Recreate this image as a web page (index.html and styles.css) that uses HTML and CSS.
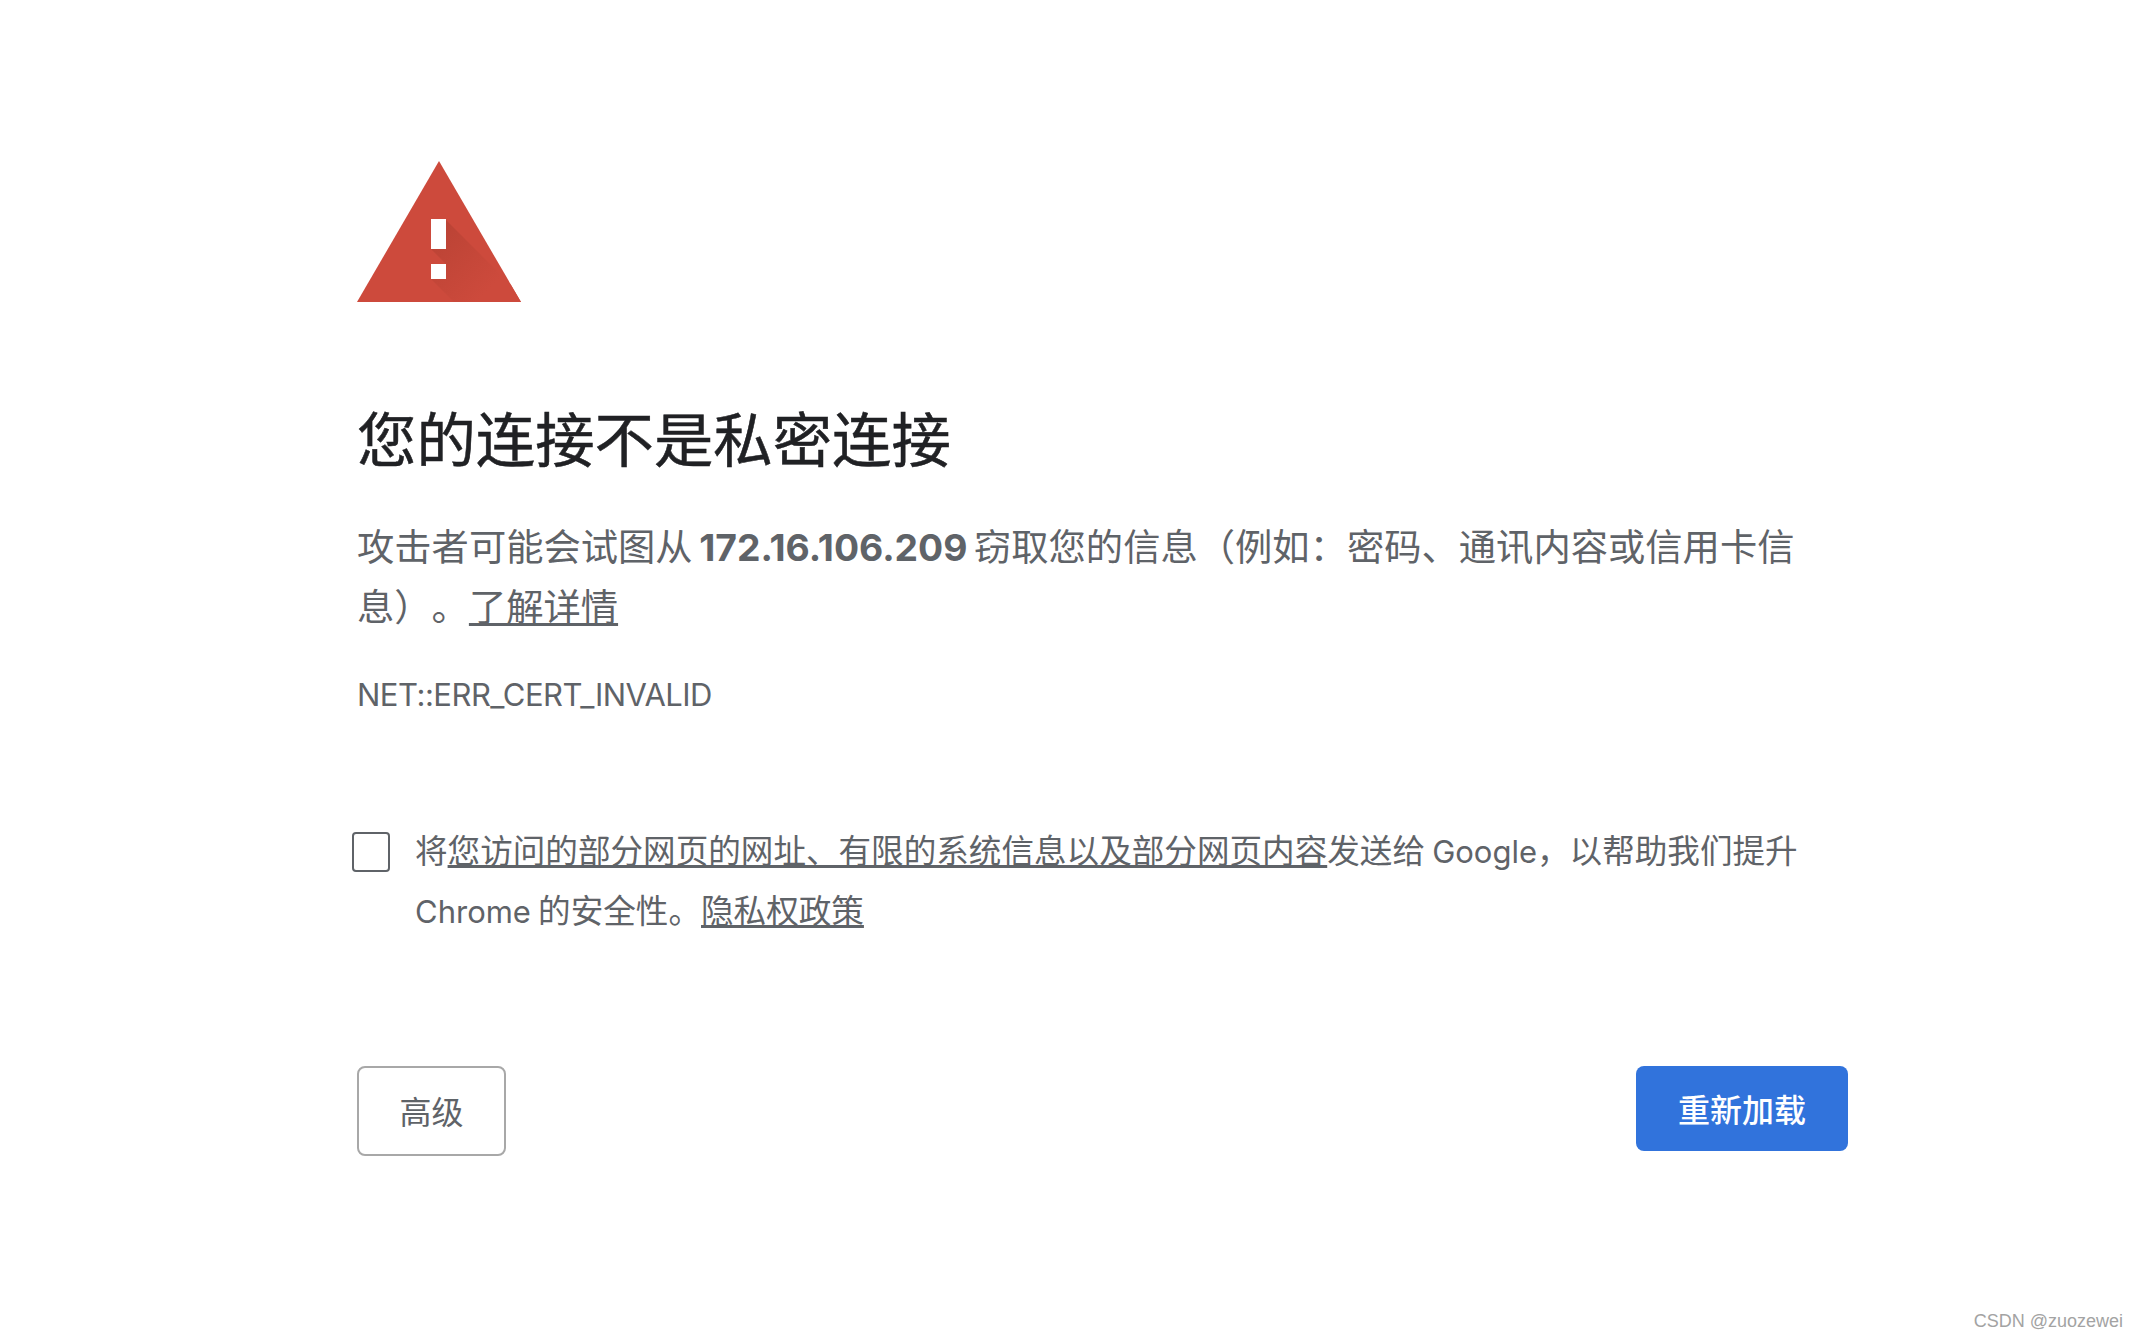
FILE: index.html
```html
<!DOCTYPE html>
<html lang="zh-CN">

<head>
    <meta charset="UTF-8">
    <title>隐私设置错误</title>
    <link rel="stylesheet" href="styles.css">
</head>

<body>
    <div class="container">
        <svg class="icon" width="164" height="141" viewBox="0 0 164 141">
            <defs>
                <linearGradient id="icon_shadow" x1="80" y1="70" x2="135" y2="125" gradientUnits="userSpaceOnUse">
                    <stop offset="0" stop-color="#bb4335"></stop>
                    <stop offset="1" stop-color="#cd4a3c"></stop>
                </linearGradient>
            </defs>
            <polygon points="82,0 164,141 0,141" fill="#cd4a3c"></polygon>
            <polygon points="89,59 154,124 164,141 97,141 74,118 89,118 89,103 74,88 89,88" fill="url(#icon_shadow)"></polygon>
            <rect x="74" y="58" width="15" height="30" fill="#fff"></rect>
            <rect x="74" y="103" width="15" height="15" fill="#fff"></rect>
        </svg>

        <h1 class="title">您的连接不是私密连接</h1>

        <p class="desc">攻击者可能会试图从 <b>172.16.106.209</b> 窃取您的信息（例如：密码、通讯内容或信用卡信息）。<a href="#">了解详情</a></p>
        <div class="err_code">NET::ERR_CERT_INVALID</div>

        <div class="report">
            <span class="checkbox"></span>
            <p class="report_text">将<a href="#">您访问的部分网页的网址、有限的系统信息以及部分网页内容</a>发送给 <span class="latin">Google</span>，以帮助我们提升 <span class="latin">Chrome</span> 的安全性。<a href="#">隐私权政策</a></p>
        </div>

        <div class="buttons">
            <button class="btn_advanced">高级</button>
            <button class="btn_reload">重新加载</button>
        </div>
    </div>
    <div class="watermark">CSDN @zuozewei</div>
</body>

</html>
```

FILE: styles.css
```css
body {
    margin: 0;
    background-color: #fff;
    color: #5f6368;
    font-family: Inter, "Noto Sans CJK SC", sans-serif;
    text-spacing-trim: space-all;
}

.container {
    width: 1491px;
    margin-left: 357px;
    padding-top: 161px;
}

.icon {
    display: block;
}

.title {
    margin: 0;
    padding-top: 96px;
    color: #202124;
    font-size: 59.4px;
    font-weight: 400;
    line-height: 84px;
    -webkit-text-stroke: 0.5px #202124;
}

.desc {
    width: 1450px;
    margin: 0;
    padding-top: 36px;
    font-size: 37.3px;
    line-height: 60px;
    word-spacing: -4px;
}

.desc b {
    font-weight: 700;
}

a {
    color: #5f6368;
}

.err_code {
    padding-top: 35px;
    font-size: 31px;
    line-height: 44px;
    letter-spacing: -0.5px;
}

.report {
    display: flex;
    padding-top: 104px;
}

.checkbox {
    flex: none;
    box-sizing: border-box;
    width: 38px;
    height: 40px;
    margin: 11px 25px 0 -5px;
    border: 2px solid #5f6368;
    border-radius: 4px;
}

.report_text {
    width: 1450px;
    margin: 0;
    font-size: 32.6px;
    line-height: 60px;
    word-spacing: -2px;
}

.latin {
    font-size: 31px;
    line-height: 1;
}

.buttons {
    display: flex;
    justify-content: space-between;
    align-items: flex-start;
    padding-top: 125px;
}

.btn_advanced {
    width: 149px;
    height: 90px;
    padding-bottom: 4px;
    border: 2px solid #a8a8a8;
    border-radius: 8px;
    background-color: #fff;
    color: #5f6368;
    font-family: inherit;
    font-size: 32px;
}

.btn_reload {
    width: 212px;
    height: 85px;
    padding-bottom: 3px;
    border: 0;
    border-radius: 8px;
    background-color: #3173dc;
    color: #fff;
    font-family: inherit;
    font-size: 32px;
    font-weight: 500;
}

.watermark {
    position: absolute;
    right: 15px;
    bottom: 6px;
    color: #a3a3a3;
    font-family: "Liberation Sans", sans-serif;
    font-size: 18px;
}
```
